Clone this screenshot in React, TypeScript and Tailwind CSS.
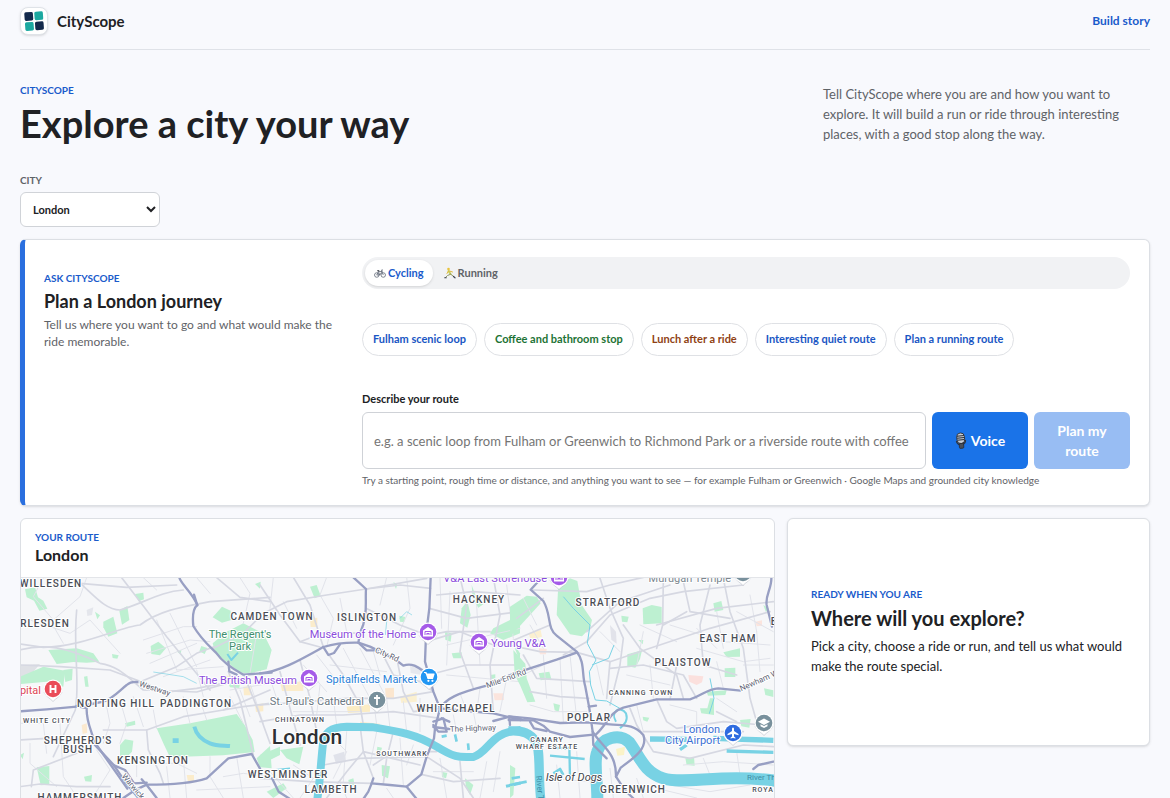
import React, { useState } from 'react'

const FONT = "font-['Lato','Open_Sans',sans-serif]"

interface Suggestion {
  label: string
  tone: string
}

const suggestions: Suggestion[] = [
  { label: 'Fulham scenic loop', tone: 'text-[#1a56c4]' },
  { label: 'Coffee and bathroom stop', tone: 'text-[#1d7335]' },
  { label: 'Lunch after a ride', tone: 'text-[#8f3f14]' },
  { label: 'Interesting quiet route', tone: 'text-[#1a56c4]' },
  { label: 'Plan a running route', tone: 'text-[#1a56c4]' },
]

function Eyebrow({ children }: { children: React.ReactNode }) {
  return <p className="text-[10px] leading-3 font-bold uppercase text-[#1a5bcb]">{children}</p>
}

function Logo() {
  return (
    <span className="flex size-7 items-center justify-center rounded-lg border border-[#dfe3e8] bg-white shadow-sm">
      <svg viewBox="0 0 20 20" className="size-5" aria-hidden="true">
        <g transform="rotate(-4 10 10)">
          <rect x="0.8" y="0.8" width="8.6" height="8.6" rx="1.6" fill="#13294b" />
          <rect x="10.8" y="0.8" width="8.6" height="8.6" rx="1.6" fill="#1ba8a0" />
          <rect x="0.8" y="10.8" width="8.6" height="8.6" rx="1.6" fill="#1ba8a0" />
          <rect x="10.8" y="10.8" width="8.6" height="8.6" rx="1.6" fill="#13294b" />
        </g>
      </svg>
    </span>
  )
}

function BikeIcon() {
  return (
    <svg viewBox="0 0 24 18" className="h-[9px] w-3" fill="none" stroke="#5a6272" strokeWidth="1.5" aria-hidden="true">
      <circle cx="5.5" cy="12" r="4.5" />
      <circle cx="18.5" cy="12" r="4.5" />
      <path d="M5.5 12 9 5h7l-4.5 7h-6M9 5l2.500 7M18.500 12 15 2h3" />
      <path d="M6.500 3.500h4" stroke="#20242c" strokeWidth="2" />
    </svg>
  )
}

function RunnerIcon() {
  return (
    <svg viewBox="0 0 24 24" className="size-3" fill="none" strokeLinecap="round" aria-hidden="true">
      <circle cx="9" cy="4" r="2.600" fill="#e8c33c" />
      <path d="m9 8 4 6" stroke="#c6cf5c" strokeWidth="4" />
      <path d="m9 8-3 5M11 8l6 2" stroke="#e0b93a" strokeWidth="2" />
      <path d="m12 15-5 2-4 4M13 14l5 4" stroke="#8d9660" strokeWidth="2" />
      <path d="M1.500 21.500h3M19 19l3 2.500" stroke="#3c4250" strokeWidth="2.400" />
    </svg>
  )
}

function MicIcon() {
  return (
    <svg viewBox="0 0 12 18" className="h-[18px] w-3" aria-hidden="true">
      <g transform="rotate(-6 6 9)">
        <rect x="2.200" y="1" width="7.600" height="10.500" rx="3.600" fill="#c9ced6" stroke="#2a2e36" strokeWidth="0.900" />
        <path d="M2.500 3.800h7M2.500 5.800h7M2.500 7.800h7" stroke="#2a2e36" strokeWidth="1" />
        <path d="M1.500 8.500c0 3 2 4 4.500 4s4.500-1 4.500-4" fill="none" stroke="#31353d" strokeWidth="1.300" />
        <rect x="3.800" y="11.500" width="4.400" height="4.800" rx="1" fill="#4a4f59" stroke="#23262d" strokeWidth="0.700" />
      </g>
    </svg>
  )
}

/* ---------- map ---------- */

const PARK = '#bdf0d1'
const WATER = '#78d2e4'
const ROAD = '#989fc3'
const STREET = '#d6d8e2'

interface Section {
  x: number
  y: number
  parks: string[]
  ground: string[]
  water: [string, number][]
  arterial: string[]
  streets: string[]
  lanes: string[]
}

// each section of the map is drawn on its own grid, three units to the pixel
const west: Section = {
  x: 10,
  y: 510,
  parks: [
    'M45 238 75 232 84 262 100 272 112 296 88 302 72 272 50 262Z',
    'M280 335 310 320 322 370 295 380 280 352Z',
    'M328 302 352 288 358 330 336 344Z',
    'M375 252 400 248 402 268 386 274Z',
    'M422 408 445 395 468 415 450 436 424 432Z',
    'M115 420 200 415 250 430 268 455 230 458 190 456 140 462Z',
    'M30 500 100 470 165 482 160 530 110 515 30 522Z',
    'M160 480 188 476 186 510 166 516Z',
    'M608 400 650 365 700 340 760 370 785 420 770 478 720 490 690 488 650 455 615 430Z',
    'M608 322 636 290 662 302 664 330 636 338Z',
    'M440 655 540 640 680 612 704 645 728 690 734 726 640 736 480 742 462 704Z',
    'M330 705 345 688 370 692 366 725 345 746 330 738Z',
    'M80 772 118 768 118 824 92 826Z',
    'M740 745 780 708 785 775 750 772Z',
    'M345 640 375 632 376 644 350 650Z',
    'M255 305 270 316 262 328Z',
    'M735 222 752 215 750 236Z',
    'M222 800 246 795 244 815 226 814Z',
    'M574 408 592 414 584 432 568 424Z',
    'M655 520 690 520 688 534 660 532Z',
    'M222 500 232 498 236 530 226 530Z',
    'M306 432 326 436 322 446 308 444Z',
    'M500 424 514 420 512 434Z',
    'M30 735 42 728 38 748Z',
  ],
  ground: [
    '#dfe1e6|M30 465 90 462 66 490 30 500Z',
    '#fbe9cf|M215 645 230 640 232 668 218 672Z',
    '#fbeccb|M700 530 722 528 722 556 702 556Z',
    '#fbf0d0|M645 498 662 496 660 520 650 520Z',
    '#e4e6ec|M230 300 250 292 246 315 232 318Z',
    '#fbeccb|M530 795 552 795 552 815 534 815Z',
    '#fbeccb|M735 585 760 580 760 604 738 606Z',
  ],
  water: [
    ['M553 650C560 680 580 692 600 700S640 706 660 708', 12],
    ['M488 692 506 692', 14],
    ['M652 432 664 450 684 428', 6],
    ['M430 486 520 500 560 520', 2],
  ],
  arterial: [
    'M508 203C515 225 545 245 562 285C545 300 548 330 550 348C575 390 600 410 618 428C640 460 670 478 700 494L785 488',
    'M552 254 562 286',
    'M30 604 110 598 200 590',
    'M230 585 280 575C310 565 330 540 350 525Q362 514 382 516',
    'M200 588 230 594C228 640 250 670 254 704L312 766 345 815 385 864',
    'M262 708 320 790 352 836M312 766 345 780 372 820 410 818',
    'M340 864 372 842 410 824C470 824 540 822 590 805L655 745 725 732 750 776',
    'M395 808 410 825 440 864',
    'M655 455 658 484 680 494',
  ],
  streets: [
    'M30 402 100 412C220 410 330 350 390 345 450 300 520 290 600 275L780 262',
    'M30 420C100 400 170 410 270 460 330 470 350 500 400 540L560 546 650 520',
    'M30 465 150 470 300 480 420 525',
    'M335 203 380 262 470 380 600 540',
    'M190 203C240 240 280 300 330 300 400 280 450 245 520 240',
    'M210 220 350 232 500 225M620 203 690 262 780 275',
    'M200 300C190 400 205 480 200 560L196 600 130 740',
    'M30 690 110 685 180 690M30 830 90 822 200 830 300 830',
    'M200 730 70 780 64 830M380 520 500 470 560 430 612 410',
    'M280 660 410 660 520 620 640 600 780 540',
    'M410 660 415 720 450 790 460 820M700 490 740 590 780 700',
    'M655 485 690 570 730 735M640 600 700 590 780 580',
    'M610 415 700 370 740 330 780 320M382 516 430 532 480 545 560 535 640 520',
  ],
  lanes: [
    'M100 203 70 260 130 330 210 260 230 203M60 330 180 370 240 330 330 430',
    'M440 330 500 480M480 310 560 470M400 390 520 350 560 350M420 460 560 400M460 500 600 450',
    'M410 430 540 390 600 395M560 480 580 560M500 480 640 470',
    'M30 640 100 640 110 730M60 700 60 760 140 830M150 640 160 800 200 860',
    'M290 590 300 640 280 700M330 570 350 640 330 700M370 560 400 650M430 600 440 655M520 560 540 640M570 570 590 630',
    'M380 750 380 800M420 760 500 760 560 790M470 770 480 864M520 745 530 864M600 740 600 800 640 864M680 740 700 864',
    'M640 800 700 790 780 800M560 840 780 830M740 370 720 490M660 540 780 520M660 560 700 640M690 540 720 620M720 520 760 640',
    'M690 203 720 250 700 340M560 203 600 250M250 860 300 780 260 720M120 330 160 400M400 203 440 240',
  ],
}

const central: Section = {
  x: 260,
  y: 565,
  parks: [
    'M0 225 14 235 16 300 0 320Z',
    'M605 130 622 108 632 150 622 188 600 175Z',
    'M635 60 650 100 670 118 655 128 638 100Z',
    'M700 190 780 150 780 205 730 225 690 205Z',
    'M555 200 575 205 572 230 556 224Z',
    'M575 265 605 262 604 280 580 280Z',
    'M150 65 170 60 182 92 164 100Z',
    'M755 225 780 265 780 290Z',
    'M0 570 60 545 60 570 0 600Z',
    'M60 555 130 545 118 598 80 580Z',
    'M352 545 366 548 362 562 350 560Z',
    'M365 600 390 604 384 640 366 632Z',
    'M615 640 640 660 630 690 618 668Z',
    'M690 330 706 328 706 345 692 345Z',
    'M418 152 436 156 432 172 420 170Z',
    'M20 680 70 655 80 670 40 699Z',
    'M545 620 562 624 558 640 546 636Z',
    'M400 52 412 56 408 72Z',
    'M265 645 280 640 284 660 268 662Z',
  ],
  ground: [
    '#fbeccb|M150 160 172 158 172 186 152 186Z',
    '#fbeccb|M60 350 130 350 130 378 66 378Z',
    '#fbecc4|M260 425 330 418 330 440 264 444Z',
    '#fbe6cf|M375 370 402 368 402 400 378 402Z',
    '#fbe4dd|M700 385 730 385 732 405 704 406Z',
    '#fbf0d0|M420 395 470 380 470 410 424 414Z',
    '#e6e8ee|M450 300 490 310 486 330 452 324Z',
    '#fbeccb|M300 470 360 476 356 490 302 486Z',
    '#e0e2ea|M220 570 252 560 258 590 228 596Z',
  ],
  water: [
    ['M172 702C180 650 182 600 188 545C190 500 215 486 260 485L340 487C420 500 470 508 530 545S600 576 640 576C690 560 690 500 782 495', 24],
    ['M545 515 560 512M585 508 590 530M624 535 626 555', 8],
    ['M40 615 90 610', 5],
    ['M738 664 782 654', 9],
    ['M382 150 376 210M420 160 440 140 456 150', 2],
  ],
  arterial: [
    'M0 325C60 320 120 285 190 246C230 234 260 232 295 233L330 245 365 262 412 288 430 302C460 290 480 312 505 330',
    'M280 37 318 72C315 110 325 150 300 205L295 233',
    'M190 246 205 270 222 264 240 238M295 233 320 256 345 256',
    'M512 37 508 130 498 210 495 290 508 335 520 380 540 430 525 490 522 520 500 575 484 628 440 665 390 660 335 655',
    'M540 430C560 400 590 385 680 362L782 320',
    'M540 430 620 438 700 445 782 465M520 470 550 460 560 500 535 500 520 480',
    'M520 486 568 492M568 470 545 460M700 468 750 455 782 460M748 455 750 480',
    'M335 655 325 680 310 702M440 665 470 702M36 640 56 680 90 702M335 655 340 640',
  ],
  streets: [
    'M0 150 80 110 200 90 318 72 500 40M0 60 60 150 120 230 180 246',
    'M100 37 150 120 190 246 250 330 300 420 310 480',
    'M318 72 420 60 512 70M318 130 420 180 500 210M300 205 200 200 120 230',
    'M365 262 400 330 480 350 520 380M412 288 430 380 460 440 540 430',
    'M0 420 140 410 260 400 400 400 520 380M0 470 120 450 250 450 400 440 540 460',
    'M120 285 150 400 170 500M60 320 90 430 120 540',
    'M508 130 620 160 780 140M498 230 600 200 700 240 780 230M505 330 620 300 780 300',
    'M600 37 620 120 600 260 640 370M700 37 720 150 690 300 700 445',
    'M300 480 310 560 340 640M400 500 380 580 370 655M310 560 480 600M190 600 300 580 500 575',
    'M500 575 600 640 640 699M484 628 580 650 720 640M340 600 400 560 530 560',
    'M0 640 150 650 335 655M200 699 260 620 310 560M600 590 610 699',
    'M530 90 640 80 780 90M510 210 560 200 690 200',
  ],
  lanes: [
    'M40 37 30 130M200 37 180 90 220 160 200 246M240 100 260 200M380 37 360 120M440 37 450 130 400 240M70 110 110 190',
    'M30 340 50 400M130 300 200 380M170 270 240 360M210 300 380 320M250 250 330 400M300 250 380 400M340 260 360 330',
    'M180 360 170 450M220 400 230 480M340 400 350 480M380 400 390 490M430 410 440 500M480 400 480 500M100 440 300 440',
    'M540 37 545 190M570 80 560 300M650 120 660 300M740 60 760 220M560 240 780 190M560 330 780 350M600 385 620 438M660 370 650 440M740 340 720 440',
    'M220 520 260 560 220 640M260 500 250 650M350 500 330 600M420 520 430 660M460 540 440 600M100 600 160 640 120 699',
    'M540 580 560 699M680 590 660 699M720 560 700 680M520 620 640 620M30 620 100 699M380 670 400 699M240 650 260 699M580 450 590 500M640 440 650 490',
  ],
}

const east: Section = {
  x: 510,
  y: 565,
  parks: [
    'M0 125 50 92 80 95 92 115 60 150 0 215Z',
    'M145 60 180 40 202 48 215 120 246 165 240 190 216 214 180 208 140 150Z',
    'M398 130 425 120 455 126 455 175 400 178Z',
    'M352 268 396 256 390 282 376 308 352 304Z',
    'M10 255 46 296 50 340 76 410 52 412 30 360 14 330Z',
    'M610 115 634 108 640 135 614 140Z',
    'M640 262 690 250 690 275 650 276Z',
    'M644 310 676 308 676 336 644 336Z',
    'M86 325 118 320 124 342 92 346Z',
    'M526 580 552 576 554 602 530 600Z',
    'M570 430 592 430 600 400 612 400 612 450 574 445Z',
    'M334 152 356 155 352 172 336 170Z',
    'M690 465 722 462 718 488 694 484Z',
    'M762 370 790 376 790 396 766 390Z',
    'M398 455 418 458 412 470 400 466Z',
    'M590 380 650 376 646 390 594 392Z',
    'M130 415 150 420 146 440 134 436Z',
    'M0 600 16 610 10 690 0 699Z',
    'M760 120 776 130 768 142Z',
    'M385 225 400 225 398 238Z',
  ],
  ground: [
    '#fbe0dd|M535 330 580 334 576 352 560 360 538 350Z',
    '#fbf3c8|M318 552 345 545 342 570 322 572Z',
    '#e2e3ea|M300 180 318 200 320 236 304 224Z',
    '#fbf0d0|M56 205 92 195 96 215 62 224Z',
    '#fbe4dd|M736 170 756 166 756 182 740 184Z',
    '#fbe4dd|M86 250 110 252 108 268 90 268Z',
  ],
  water: [
    ['M-4 498C40 495 60 505 78 530C92 560 84 620 92 702', 28],
    ['M262 702C262 640 250 590 262 560C275 515 330 505 358 532C390 575 400 620 460 640S640 625 800 648', 36],
    ['M420 522 530 523M610 520 790 526', 16],
    ['M650 558 790 562M510 554 530 540', 10],
    ['M120 572 224 582M178 545 180 640M130 548 180 552', 7],
    ['M130 625 150 612 160 630M0 660 50 650M5 640 30 636', 8],
    ['M160 95 190 130 240 180 232 235 258 285 238 320 242 360 256 405 290 408 340 436M312 240 296 280 246 300', 3],
    ['M318 470C300 440 330 420 348 445C356 470 340 480 330 490', 6],
    ['M600 340 612 400 598 446', 3],
  ],
  arterial: [
    'M86 48 62 74 100 108C125 150 110 190 140 212L200 260C225 290 215 330 226 365L238 430 248 500C270 540 320 560 318 635L345 676 372 702',
    'M-4 332 60 310 140 284 202 262',
    'M-4 454 60 460 150 474 230 472 300 478C340 482 370 476 400 510C415 550 370 580 332 608L318 635',
    'M-4 465 70 466 100 482 120 500 180 516 258 508C290 480 300 440 340 428L440 403 540 403C580 390 590 372 625 370L692 377',
    'M60 470 72 490 110 498M248 500 250 540 290 580',
    'M784 37C786 70 765 90 770 120L786 185',
    'M236 425 258 422',
    'M730 612 745 600 790 590',
  ],
  streets: [
    'M160 270 230 230 300 150 420 100 520 80 700 60M230 200 330 110 480 60',
    'M270 40 300 130 340 220 330 300 300 420M340 180 390 250 500 330 520 400',
    'M200 262 300 290 420 250 600 190 780 140M440 180 620 130 790 110',
    'M640 40 660 140 700 250 720 400 740 470M600 60 570 180 580 300 680 330',
    'M530 140 460 180M460 40 458 180 440 250M520 50 540 140 660 160',
    'M360 430 380 480 430 560 540 580 700 540 790 545',
    'M300 310 400 300 520 330 560 400M500 300 480 403M440 403 470 470 500 490 640 470 760 480',
    'M-4 240 90 260 200 262M40 270 80 340 240 350M60 380 150 395 236 400',
    'M400 500 560 500 700 500M300 290 290 400M70 75 230 80 300 60 400 37',
    'M100 100 20 160M120 180 0 230M620 440 680 470',
  ],
  lanes: [
    'M390 180 500 230M400 200 380 300M350 330 480 360M420 300 430 400M560 190 620 250M620 140 640 250M680 140 790 200',
    'M480 180 640 230 780 240M720 90 740 200M560 250 700 290 780 280M620 290 640 370M700 300 790 300M740 200 750 320',
    'M40 100 80 180M20 340 100 300M100 270 110 400M150 280 160 470M180 270 200 460M60 420 130 440 230 440',
    'M60 180 100 250M260 300 280 390M270 200 330 260M380 420 400 500M480 420 560 440 560 490M620 400 680 440',
    'M120 640 240 650M140 600 150 699M200 560 210 699M300 610 310 699M380 640 400 699M440 670 560 699M480 660 600 680 720 660',
    'M520 600 640 590 790 600M580 580 600 630M680 560 690 630',
  ],
}

function MapSection({ section }: { section: Section }) {
  return (
    <g transform={`translate(${section.x} ${section.y}) scale(0.33333)`} fill="none" strokeLinejoin="round" strokeLinecap="round">
      {section.ground.map((item) => {
        const [fill, d] = item.split('|')
        return <path key={d} d={d} fill={fill} />
      })}
      {section.parks.map((d) => <path key={d} d={d} fill={PARK} />)}
      {section.lanes.map((d) => <path key={d} d={d} stroke="#e1e3ea" strokeWidth="3" />)}
      {section.streets.map((d) => <path key={d} d={d} stroke={STREET} strokeWidth="5" />)}
      {section.water.map(([d, w]) => <path key={d} d={d} stroke={WATER} strokeWidth={w} strokeLinecap="butt" />)}
      {section.arterial.map((d) => <path key={d} d={d} stroke={ROAD} strokeWidth="7" />)}
    </g>
  )
}

interface Place {
  name: string
  x: number
  y: number
  size?: number
  turn?: number
}

const districts: Place[] = [
  { name: 'WILLESDEN', x: 51, y: 587 },
  { name: 'RLESDEN', x: 45, y: 627 },
  { name: 'CAMDEN TOWN', x: 272, y: 620 },
  { name: 'ISLINGTON', x: 367, y: 621 },
  { name: 'HACKNEY', x: 479, y: 603 },
  { name: 'STRATFORD', x: 608, y: 606 },
  { name: 'EAST HAM', x: 728, y: 642 },
  { name: 'PLAISTOW', x: 683, y: 666 },
  { name: 'NOTTING HILL', x: 116, y: 707 },
  { name: 'PADDINGTON', x: 196, y: 707 },
  { name: "SHEPHERD'S", x: 78, y: 744 },
  { name: 'BUSH', x: 78, y: 753 },
  { name: 'KENSINGTON', x: 153, y: 764 },
  { name: 'WHITECHAPEL', x: 456, y: 712 },
  { name: 'POPLAR', x: 589, y: 721 },
  { name: 'WESTMINSTER', x: 288, y: 778 },
  { name: 'LAMBETH', x: 331, y: 793 },
  { name: 'GREENWICH', x: 633, y: 793 },
  { name: 'HAMMERSMITH', x: 80, y: 801 },
  { name: 'E', x: 774, y: 625 },
  { name: 'WHITE CITY', x: 47, y: 723, size: 7 },
  { name: 'CHINATOWN', x: 300, y: 722, size: 7 },
  { name: 'SOUTHWARK', x: 402, y: 756, size: 7 },
  { name: 'CANNING TOWN', x: 641, y: 695, size: 7 },
  { name: 'CANARY', x: 547, y: 742, size: 7 },
  { name: 'WHARF ESTATE', x: 547, y: 749, size: 7 },
  { name: 'ROYA', x: 763, y: 792, size: 7 },
]

const roadNames: Place[] = [
  { name: 'Westway', x: 154, y: 691, turn: 18 },
  { name: 'City Rd', x: 386, y: 657, turn: 24 },
  { name: 'Mile End Rd', x: 507, y: 681, turn: -20 },
  { name: 'The Highway', x: 473, y: 731, turn: -2 },
  { name: 'Warwick', x: 131, y: 788, turn: 50 },
  { name: 'Newham W', x: 760, y: 683, turn: -24 },
]

const PURPLE = '#8a4bdc'

interface Pin extends Place {
  fill: string
  icon: 'museum' | 'cart' | 'cross' | 'plane' | 'school' | 'hospital'
}

const pins: Pin[] = [
  { name: 'V&A East Storehouse', x: 559, y: 577, fill: '#a55be8', icon: 'museum' },
  { name: 'Museum of the Home', x: 428, y: 632, fill: '#a55be8', icon: 'museum' },
  { name: 'Young V&A', x: 479, y: 642, fill: '#a55be8', icon: 'museum' },
  { name: 'The British Museum', x: 309, y: 678, fill: '#a55be8', icon: 'museum' },
  { name: 'Spitalfields Market', x: 429, y: 677, fill: '#2196f3', icon: 'cart' },
  { name: "St. Paul's Cathedral", x: 377, y: 700, fill: '#78909c', icon: 'cross' },
  { name: 'London City Airport', x: 733, y: 733, fill: '#2f6be0', icon: 'plane' },
  { name: 'University', x: 764, y: 723, fill: '#78909c', icon: 'school' },
  { name: 'Hospital', x: 53, y: 689, fill: '#ea4c59', icon: 'hospital' },
  { name: 'Murugan Temple', x: 743, y: 573, fill: '#78909c', icon: 'school' },
]

const glyphs: Record<Pin['icon'], React.ReactNode> = {
  museum: (
    <>
      <path d="M-5-1.500 0-5l5 3.500v6H-5Z" fill="#fff" />
      <path d="M-3 3V-.500H3V3M-1 3V1l1 1 1-1v2" fill="none" stroke="#a55be8" strokeWidth="1" />
    </>
  ),
  cart: (
    <>
      <path d="M-5-4.500h2L-1 1.500h4.500L5-3h-7.500" fill="#fff" stroke="#fff" strokeWidth="1.200" strokeLinejoin="round" />
      <circle cx="-0.600" cy="3.800" r="1.100" fill="#fff" />
      <circle cx="3.400" cy="3.800" r="1.100" fill="#fff" />
    </>
  ),
  cross: <path d="M0-5V5M-3-2H3" stroke="#fff" strokeWidth="1.800" />,
  plane: <path d="M0-5.500c.8 0 1 .8 1 1.500v2L5.500 1v1.200L1 1v2.500L2.500 4.700v.9L0 5l-2.500.6v-.9L-1 3.500V1l-4.500 1.200V1L-1-2v-2c0-.7.200-1.500 1-1.500Z" fill="#fff" />,
  school: (
    <>
      <path d="M0-4.500 6-1.300 0 2-6-1.300Z" fill="#fff" />
      <path d="M-3.500 1.200v2L0 5l3.500-1.800v-2L0 3Z" fill="#fff" />
    </>
  ),
  hospital: <path d="M-2.500-4V4M2.500-4V4M-2.500 0h5" stroke="#fff" strokeWidth="1.900" />,
}

function CityMap() {
  return (
    <svg
      viewBox="21 578 753 300"
      preserveAspectRatio="xMinYMin slice"
      className="block aspect-[753/300] w-full bg-[#f6f7f9] font-[Roboto,sans-serif]"
      role="img"
      aria-label="Map of London"
    >
      <MapSection section={west} />
      <MapSection section={central} />
      <MapSection section={east} />

      <g textAnchor="middle" stroke="#fff" strokeWidth="2" strokeLinejoin="round" paintOrder="stroke">
        {districts.map((place) => (
          <text
            key={place.name}
            x={place.x}
            y={place.y}
            fontSize={place.size ?? 10}
            fontWeight="500"
            className="tracking-[1px]"
            fill="#4a4d55"
          >
            {place.name}
          </text>
        ))}
        {roadNames.map((place) => (
          <text
            key={place.name}
            fontSize="8"
            fill="#5d6374"
            transform={`translate(${place.x} ${place.y}) rotate(${place.turn})`}
          >
            {place.name}
          </text>
        ))}
        <text x="307" y="744" fontSize="21" fontWeight="500" fill="#2d2f33">London</text>
        <text x="574" y="781" fontSize="11" fontStyle="italic" fill="#3e4249">Isle of Dogs</text>
        <text x="240" y="638" fontSize="11" fill="#3d8f6d">The Regent's</text>
        <text x="240" y="650" fontSize="11" fill="#3d8f6d">Park</text>
      </g>

      <g fontSize="11" stroke="#fff" strokeWidth="2" strokeLinejoin="round" paintOrder="stroke">
        <g textAnchor="end">
          <text x="547" y="582" fill={PURPLE}>V&amp;A East Storehouse</text>
          <text x="416" y="638" fill={PURPLE}>Museum of the Home</text>
          <text x="297" y="684" fill={PURPLE}>The British Museum</text>
          <text x="417" y="683" fill="#2a7fd8">Spitalfields Market</text>
          <text x="364" y="705" fill="#6c7883">St. Paul's Cathedral</text>
          <text x="731" y="582" fill="#7c8790">Murugan Temple</text>
          <text x="720" y="733" fill="#3b6fd4">London</text>
          <text x="720" y="744" fill="#3b6fd4">City Airport</text>
          <text x="41" y="694" fill="#dd4653">pital</text>
        </g>
        <text x="491" y="647" fill={PURPLE}>Young V&amp;A</text>
      </g>
      <text x="747" y="780" fontSize="8" fill="#3f8ea6">River Thames</text>
      <text fontSize="8" fill="#3f8ea6" transform="translate(536 776) rotate(84)">River Thames</text>

      {pins.map((pin) => (
        <g key={pin.name} transform={`translate(${pin.x} ${pin.y})`}>
          <path d="M-9 3C-7 8-3 9 0 12.500 3 9 7 8 9 3Z" fill="#fff" stroke="#b9bec8" strokeWidth="0.600" />
          <circle r="9.400" fill="#fff" />
          <circle r="8.300" fill={pin.fill} />
          {glyphs[pin.icon]}
        </g>
      ))}
    </svg>
  )
}

/* ---------- page ---------- */

function Planner() {
  const [mode, setMode] = useState<'cycling' | 'running'>('cycling')
  const [prompt, setPrompt] = useState('')

  const tab = 'flex h-[26px] items-center gap-0.5 rounded-full px-[9px] text-[11px] font-bold'
  const active = 'bg-white text-[#1a5bcb] shadow'
  const idle = 'text-[#5f6368]'

  return (
    <section className="mt-3 grid grid-cols-[298px_minmax(0,1fr)] gap-5 rounded-md border border-l-[5px] border-[#dcdfe4] border-l-[#2a6fdf] bg-white py-[17px] px-[19px] shadow-sm">
      <div className="pt-[15px]">
        <Eyebrow>Ask CityScope</Eyebrow>
        <h2 className="mt-[5px] text-lg leading-6 font-bold">Plan a London journey</h2>
        <p className="mt-[3px] text-xs leading-[17px] text-[#5f6368]">
          Tell us where you want to go and what would make the ride memorable.
        </p>
      </div>

      <div>
        <div className="flex h-8 items-center gap-0.5 rounded-2xl bg-[#f1f2f4] p-[3px]">
          <button type="button" onClick={() => setMode('cycling')} className={`${tab} ${mode === 'cycling' ? active : idle}`}>
            <BikeIcon />
            Cycling
          </button>
          <button type="button" onClick={() => setMode('running')} className={`${tab} ${mode === 'running' ? active : idle}`}>
            <RunnerIcon />
            Running
          </button>
        </div>

        <div className="mt-[34px] flex flex-wrap gap-[7px]">
          {suggestions.map(({ label, tone }) => (
            <button
              key={label}
              type="button"
              onClick={() => setPrompt(label)}
              className={`h-[33px] rounded-full border border-[#dfe1e5] bg-white px-2.5 text-[11px] font-bold ${tone}`}
            >
              {label}
            </button>
          ))}
        </div>

        <form className="mt-[35px]" onSubmit={(e) => e.preventDefault()}>
          <label htmlFor="route" className="block text-[11px] leading-4 font-bold">Describe your route</label>
          <div className="mt-[5px] grid grid-cols-[minmax(0,1fr)_96px_96px] gap-1.5">
            <input
              id="route"
              value={prompt}
              onChange={(e) => setPrompt(e.target.value)}
              placeholder="e.g. a scenic loop from Fulham or Greenwich to Richmond Park or a riverside route with coffee"
              className="h-[57px] rounded-md border border-[#cfd2d7] bg-white px-[11px] text-[13px] placeholder:text-[#757575]"
            />
            <button type="button" className="flex items-center justify-center gap-1 rounded-md bg-[#1a73e8] text-sm font-bold text-white">
              <MicIcon />
              Voice
            </button>
            <button type="submit" className="rounded-md bg-[#98bdf3] px-4 text-sm leading-5 font-bold text-white">
              Plan my route
            </button>
          </div>
          <p className="mt-[3px] text-[10px] leading-4 text-[#5f6368]">
            Try a starting point, rough time or distance, and anything you want to see — for example Fulham or Greenwich · Google Maps and grounded city knowledge
          </p>
        </form>
      </div>
    </section>
  )
}

export default function App() {
  return (
    <div className={`min-h-screen bg-[#f8f9fd] px-5 text-[#202124] ${FONT}`}>
      <header className="flex items-center justify-between border-b border-[#dfe2e8] pt-[7px] pb-3.5">
        <a href="#" className="flex items-center gap-[9px] text-[15px] leading-5 font-bold">
          <Logo />
          CityScope
        </a>
        <a href="#story" className="text-xs font-bold text-[#1a5bcb]">Build story</a>
      </header>

      <main className="pt-[34px]">
        <div className="flex items-start justify-between">
          <div>
            <Eyebrow>CityScope</Eyebrow>
            <h1 className="mt-1 text-[38px] leading-[46px] font-bold">Explore a city your way</h1>
          </div>
          <p className="w-[327px] text-[13px] leading-5 text-[#5f6368]">
            Tell CityScope where you are and how you want to explore. It will build a run or ride through interesting places, with a good stop along the way.
          </p>
        </div>

        <div className="mt-7 flex flex-col items-start gap-1.5">
          <label htmlFor="city" className="text-[10px] leading-3 font-bold text-[#5f6368]">CITY</label>
          <select id="city" className="h-[35px] w-[140px] rounded-md border border-[#d0d3d8] bg-white px-2 text-[11px] font-bold">
            <option>London</option>
          </select>
        </div>

        <Planner />

        <div className="mt-3 grid grid-cols-[minmax(0,1fr)_363px] items-start gap-3 pb-5">
          <section className="overflow-hidden rounded-md border border-[#dcdfe4] bg-white">
            <div className="border-b border-[#e3e5e9] px-3.5 pt-3 pb-3">
              <Eyebrow>Your route</Eyebrow>
              <h2 className="mt-0.5 text-base leading-5 font-bold">London</h2>
            </div>
            <CityMap />
          </section>

          <section className="flex h-[228px] flex-col justify-center rounded-md border border-[#dcdfe4] bg-white px-[23px] shadow-sm">
            <Eyebrow>Ready when you are</Eyebrow>
            <h2 className="mt-1.5 text-xl leading-6 font-bold">Where will you explore?</h2>
            <p className="mt-1.5 text-[13px] leading-5">
              Pick a city, choose a ride or run, and tell us what would make the route special.
            </p>
          </section>
        </div>
      </main>
    </div>
  )
}
